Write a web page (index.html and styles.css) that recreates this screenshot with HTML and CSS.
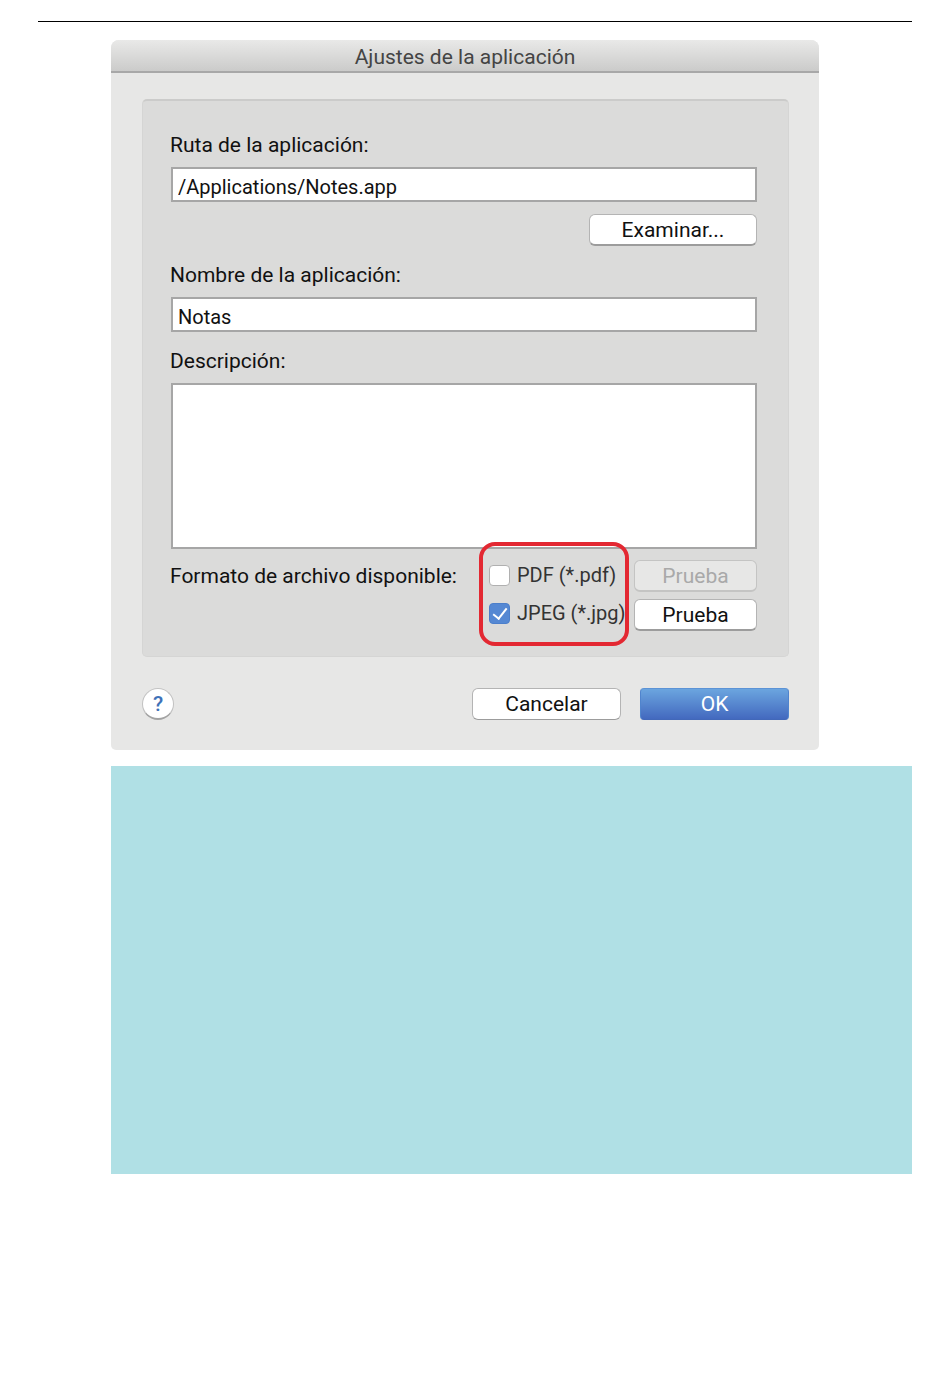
FILE: index.html
```html
<!DOCTYPE html>
<html lang="es">
<head>
    <meta charset="UTF-8">
    <meta name="viewport" content="width=device-width, initial-scale=1.0">
    <title>Ajustes de la aplicación</title>
    <link rel="stylesheet" href="styles.css">
</head>
<body>

<hr class="rule">

<main class="content">
    <form class="dialog">
        <h1 class="titlebar">Ajustes de la aplicación</h1>

        <div class="dialog-body">
            <div class="panel">
                <label class="label" for="path">Ruta de la aplicación:</label>
                <input class="field" type="text" id="path" value="/Applications/Notes.app">
                <button class="button browse" type="button">Examinar...</button>

                <label class="label" for="name">Nombre de la aplicación:</label>
                <input class="field" type="text" id="name" value="Notas">

                <label class="label" for="description">Descripción:</label>
                <textarea class="field description" id="description"></textarea>

                <div class="formats" role="group" aria-labelledby="formats-title">
                    <span class="formats-title" id="formats-title">Formato de archivo disponible:</span>
                    <div class="options">
                        <label class="option"><input class="check" type="checkbox">PDF (*.pdf)</label>
                        <label class="option"><input class="check" type="checkbox" checked>JPEG (*.jpg)</label>
                    </div>
                    <div class="tests">
                        <button class="button" type="button" disabled>Prueba</button>
                        <button class="button" type="button">Prueba</button>
                    </div>
                </div>
            </div>

            <div class="footer">
                <button class="help" type="button">?</button>
                <button class="button action" type="button">Cancelar</button>
                <button class="button action primary" type="submit">OK</button>
            </div>
        </div>
    </form>

    <div class="note"></div>
</main>

</body>
</html>
```
FILE: styles.css
```css
*, *::before, *::after {
    box-sizing: border-box;
}

body {
    margin: 0;
    padding: 21px 38px;
    background: #fff;
    color: #111;
    font-family: Roboto, "Liberation Sans", sans-serif;
    font-size: 21px;
    line-height: 24px;
}

input, textarea, button {
    font: inherit;
    color: inherit;
}

.rule {
    height: 1px;
    margin: 0 0 18px;
    border: none;
    background: #000;
}

.content {
    padding-left: 73px;
}

.dialog {
    max-width: 708px;
    border-radius: 8px 8px 5px 5px;
    background: #e7e7e6;
    overflow: hidden;
}

.titlebar {
    margin: 0;
    padding: 5px 0 2px;
    border-bottom: 2px solid #a8a8a8;
    background: linear-gradient(#e9e9e8, #cbcbca);
    color: #444;
    font-size: 21px;
    font-weight: normal;
    text-align: center;
}

.dialog-body {
    padding: 26px 30px 30px 31px;
}

.panel {
    display: flex;
    flex-direction: column;
    padding: 32px 31px 25px 27px;
    border: 1px solid #d5d5d4;
    border-top: 2px solid #cbcbca;
    border-radius: 5px;
    background: #dbdbda;
}

.label {
    margin-bottom: 10px;
}

.field {
    height: 35px;
    margin: 0 0 17px 1px;
    padding: 5px 5px 0;
    border: 2px solid #a6a6a6;
    border-radius: 0;
    background: #fff;
    font-size: 20px;
    outline: none;
}

.description {
    height: 166px;
    margin-bottom: 11px;
    resize: none;
}

.button {
    height: 32px;
    padding: 0;
    border: 1px solid #b4b4b4;
    border-bottom: 2px solid #9c9c9c;
    border-radius: 6px;
    background: #fff;
}

.button:disabled {
    border-color: #c4c4c3;
    background: #e7e7e6;
    color: #a9a9a9;
}

.browse {
    align-self: flex-end;
    width: 168px;
    margin: -5px 0 17px;
}

/* file formats */
.formats {
    display: flex;
    align-items: flex-start;
}

.formats-title {
    flex: 1;
    padding-top: 4px;
    white-space: nowrap;
}

.options {
    position: relative;
    z-index: 0;
    display: flex;
    flex-direction: column;
    gap: 14px;
    width: 145px;
    padding-top: 3px;
}

/* red frame around the options */
.options::before {
    content: "";
    position: absolute;
    z-index: -1;
    top: -18px;
    right: 5px;
    left: -10px;
    height: 104px;
    border: 4px solid #e32832;
    border-radius: 16px;
}

.option {
    display: flex;
    align-items: center;
    gap: 7px;
    color: #333;
    font-size: 20px;
    white-space: nowrap;
}

.check {
    appearance: none;
    display: grid;
    place-items: center;
    width: 21px;
    height: 21px;
    margin: 0;
    border: 1px solid #b0b0b0;
    border-radius: 4px;
    background: #fff;
}

.check:checked {
    border-color: #4c7fcb;
    background: #5588d3;
}

.check:checked::after {
    content: "";
    width: 8px;
    height: 14px;
    margin-bottom: 3px;
    border: solid #fff;
    border-width: 0 2px 2px 0;
    transform: rotate(38deg);
}

.tests {
    display: grid;
    gap: 7px;
    width: 123px;
}

.footer {
    display: flex;
    align-items: center;
    gap: 19px;
    margin-top: 31px;
}

.help {
    width: 32px;
    height: 32px;
    margin-right: auto;
    padding: 0;
    border: 1px solid #c2c2c2;
    border-bottom: 2px solid #a2a2a2;
    border-radius: 50%;
    background: #fff;
    color: #3f72b8;
    font-weight: 500;
}

.action {
    width: 149px;
    border-bottom-width: 1px;
}

.primary {
    border-color: #5c93d6 #5084cd #4268b9;
    border-radius: 4px;
    background: linear-gradient(#6ba5df, #4369bf);
    color: #fff;
}

.note {
    height: 408px;
    margin-top: 16px;
    background: #b0e0e5;
}
```
